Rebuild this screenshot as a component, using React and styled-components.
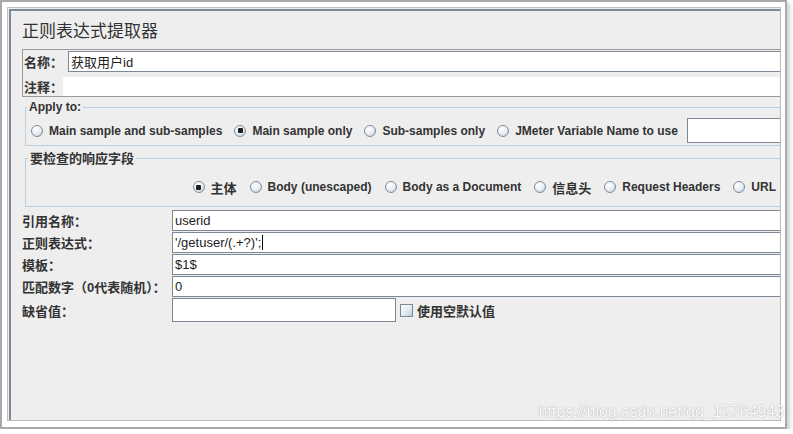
import React from 'react';
import styled, { createGlobalStyle } from 'styled-components';

const Global = createGlobalStyle`
  html, body { margin: 0; padding: 0; background: #fff; }
  body { font-family: "Liberation Sans", Arial, "Noto Sans CJK SC", sans-serif; color: #333; }
  * { box-sizing: border-box; }
`;

const Frame = styled.div`
  position: relative;
  width: 787px;
  height: 429px;
  border: 2px solid #a9a9a9;
  background: #fff;
  padding: 5px 4px 6px 5px;
  box-shadow: 3px 3px 4px rgba(0, 0, 0, 0.18);
`;

const Panel = styled.div`
  height: 100%;
  border: 1px solid #bebebe;
  padding: 1px 0 0 1px;
  background: #eeeeee;
`;

const Content = styled.div`
  height: 100%;
  border-top: 2px solid #7d8a9a;
  border-left: 2px solid #7d8a9a;
  background: #eeeeee;
  overflow: hidden;
  padding: 11px 0 0 11px;
  display: flex;
  flex-direction: column;
`;

const Title = styled.h1`
  margin: 0 0 7px 0;
  font-family: "Liberation Sans", "Noto Sans CJK SC", sans-serif;
  font-size: 17px;
  line-height: 20px;
  font-weight: 400;
  color: #333;
`;

const NameBox = styled.div`
  margin-right: -3px;
  border: 1px solid #9a9a9a;
  padding: 1px 0 0 1px;
  display: flex;
  flex-direction: column;
`;

const NameRow = styled.div`
  display: flex;
  align-items: center;
  height: ${p => p.$h}px;
  margin-top: ${p => p.$mt || 0}px;
`;

const Label = styled.span`
  flex: none;
  width: ${p => (p.$width ? `${p.$width}px` : 'auto')};
  font-family: "Liberation Sans", "Noto Sans CJK SC", sans-serif;
  font-size: 13px;
  font-weight: 700;
  color: #333;
  white-space: nowrap;
`;

const TextField = styled.div`
  flex: ${p => (p.$width ? 'none' : '1')};
  width: ${p => (p.$width ? `${p.$width}px` : 'auto')};
  height: ${p => p.$h || 21}px;
  margin-left: ${p => p.$ml || 0}px;
  background: #fff;
  border: 1px solid #7c8896;
  padding: 0 2px;
  display: flex;
  align-items: center;
  font-family: "Liberation Sans", "Noto Sans CJK SC", sans-serif;
  font-size: 13px;
  color: #222;
  white-space: nowrap;
`;

const Caret = styled.span`
  display: inline-block;
  width: 1px;
  height: 15px;
  margin-left: 1px;
  background: #000;
`;

const CommentArea = styled.div`
  flex: 1;
  height: 100%;
  background: #fff;
`;

const Group = styled.fieldset`
  margin: ${p => p.$mt}px -3px 0 3px;
  padding: ${p => p.$pad};
  border: 1px solid #b8cfe5;
  min-width: 0;
`;

const Legend = styled.legend`
  margin-left: -4px;
  padding: 0 2px;
  font-family: "Liberation Sans", "Noto Sans CJK SC", sans-serif;
  font-size: ${p => p.$size}px;
  line-height: ${p => p.$lh}px;
  font-weight: 700;
  color: #333;
`;

const RadioRow = styled.div`
  display: flex;
  align-items: center;
  justify-content: ${p => p.$justify || 'flex-start'};
  height: ${p => p.$h}px;
  gap: ${p => p.$gap}px;
  padding-right: ${p => p.$pr || 0}px;
`;

const Option = styled.label`
  display: flex;
  align-items: center;
  gap: 6px;
  flex: none;
  font-family: "Liberation Sans", "Noto Sans CJK SC", sans-serif;
  font-size: ${p => (p.$cjk ? 13 : 12)}px;
  font-weight: 700;
  color: #333;
  white-space: nowrap;
`;

const Radio = styled.span`
  flex: none;
  width: 12px;
  height: 12px;
  border-radius: 50%;
  border: 1px solid #7f8c9b;
  background: radial-gradient(circle at 35% 30%, #ffffff 0%, #e9eff5 50%, #b4c4d5 100%);
  display: flex;
  align-items: center;
  justify-content: center;
  &::after {
    content: '';
    width: 5px;
    height: 5px;
    border-radius: 1px;
    background: ${p => (p.$checked ? '#1e1e1e' : 'transparent')};
  }
`;

const FormGrid = styled.div`
  margin: 3px -3px 0 0;
  display: grid;
  grid-template-columns: 150px 1fr;
  row-gap: 1px;
  align-items: center;
`;

const Inline = styled.div`
  display: flex;
  align-items: center;
`;

const Checkbox = styled.span`
  flex: none;
  width: 13px;
  height: 13px;
  margin: 0 4px 0 4px;
  border: 1px solid #7c8896;
  background: linear-gradient(135deg, #ffffff 0%, #dfe8f1 60%, #b8c9da 100%);
`;

const Watermark = styled.span`
  position: absolute;
  right: 1px;
  bottom: 6px;
  font-family: "Liberation Sans", Arial, sans-serif;
  font-size: 16px;
  color: rgba(255, 255, 255, 0.97);
  text-shadow: 0 0 1px rgba(0, 0, 0, 0.3), 0 0 2px rgba(0, 0, 0, 0.1);
  pointer-events: none;
`;

const applyOptions = [
  { text: 'Main sample and sub-samples' },
  { text: 'Main sample only', checked: true },
  { text: 'Sub-samples only' },
  { text: 'JMeter Variable Name to use' },
];

const fieldOptions = [
  { text: '主体', checked: true, cjk: true },
  { text: 'Body (unescaped)' },
  { text: 'Body as a Document' },
  { text: '信息头', cjk: true },
  { text: 'Request Headers' },
  { text: 'URL' },
];

const formRows = [
  { label: '引用名称：', value: 'userid' },
  { label: '正则表达式：', value: "'/getuser/(.+?)';", caret: true },
  { label: '模板：', value: '$1$' },
  { label: '匹配数字（0代表随机）：', value: '0' },
];

export default function App() {
  return (
    <>
      <Global />
      <Frame>
        <Panel>
          <Content>
            <Title>正则表达式提取器</Title>
            <NameBox>
              <NameRow $h={21}>
                <Label $width={44}>名称：</Label>
                <TextField>获取用户id</TextField>
              </NameRow>
              <NameRow $h={19} $mt={5}>
                <Label $width={39}>注释：</Label>
                <CommentArea />
              </NameRow>
            </NameBox>

            <Group $mt={3} $pad="4px 0 2px 5px">
              <Legend $size={12} $lh={14}>Apply to:</Legend>
              <RadioRow $h={25} $gap={12}>
                {applyOptions.map(o => (
                  <Option key={o.text}>
                    <Radio $checked={o.checked} />
                    {o.text}
                  </Option>
                ))}
                <TextField $h={25} $ml={-3} />
              </RadioRow>
            </Group>

            <Group $mt={5} $pad="9px 0 7px 6px">
              <Legend $size={13} $lh={15}>要检查的响应字段</Legend>
              <RadioRow $h={24} $gap={13} $justify="flex-end" $pr={6}>
                {fieldOptions.map(o => (
                  <Option key={o.text} $cjk={o.cjk}>
                    <Radio $checked={o.checked} />
                    {o.text}
                  </Option>
                ))}
              </RadioRow>
            </Group>

            <FormGrid>
              {formRows.map(r => (
                <React.Fragment key={r.label}>
                  <Label>{r.label}</Label>
                  <TextField>
                    {r.value}
                    {r.caret && <Caret />}
                  </TextField>
                </React.Fragment>
              ))}
              <Label>缺省值：</Label>
              <Inline>
                <TextField $width={224} $h={24} />
                <Checkbox />
                <Label>使用空默认值</Label>
              </Inline>
            </FormGrid>
          </Content>
        </Panel>
        <Watermark>https://blog.csdn.net/qq_15764943</Watermark>
      </Frame>
    </>
  );
}
